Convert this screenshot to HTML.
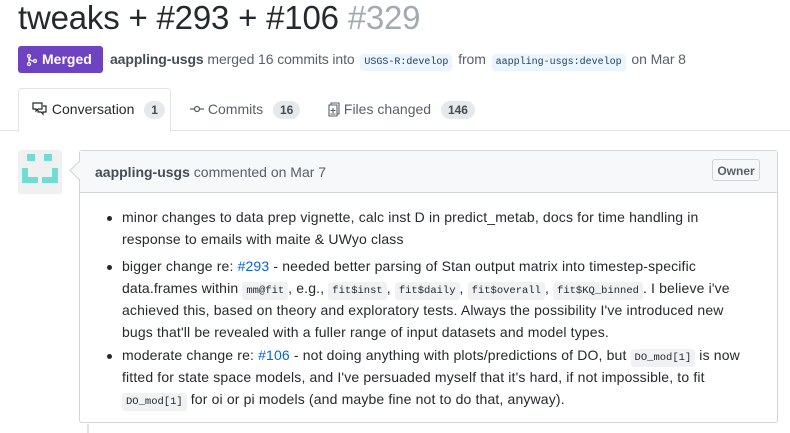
<!DOCTYPE html>
<html><head><meta charset="utf-8"><style>
body{margin:0;width:790px;height:433px;overflow:hidden;background:#fff;font-family:"Liberation Sans",Helvetica,Arial,sans-serif;color:#24292e;position:relative}
.a{position:absolute;white-space:nowrap}
h1{position:absolute;left:18px;top:-1px;margin:0;font-size:33px;font-weight:400;letter-spacing:-0.2px}
h1 span{color:#a3aab1}
.badge{position:absolute;left:18px;top:46px;width:85px;height:27px;background:#6f42c1;border-radius:3px;color:#fff;font-weight:bold;font-size:14px;line-height:27px}
.meta{position:absolute;left:110px;top:51px;font-size:14px;color:#586069;white-space:nowrap;letter-spacing:-0.1px}
.meta b{color:#444d56}
.br{font-family:"Liberation Mono",monospace;font-size:10px;background:#eaf5ff;color:#24405e;padding:3px 4px;border-radius:3px;margin:0 2px;letter-spacing:0}
.tabline{position:absolute;left:0;top:130px;width:790px;height:1px;background:#e1e4e8}
.tab1{position:absolute;left:18px;top:88px;width:151px;height:43px;border:1px solid #e1e4e8;border-bottom:none;border-radius:3px 3px 0 0;background:#fff}
.tab{position:absolute;top:101px;font-size:14px;color:#586069;white-space:nowrap}
.tab.on{color:#24292e}
.cnt{display:inline-block;background:#e6e9ec;border-radius:10px;font-size:12px;font-weight:bold;color:#444d56;padding:1px 7px;margin-left:6px;line-height:16px}
.av{position:absolute;left:18px;top:150px;width:44px;height:44px;background:#f0f0f0;border-radius:3px}
.av i{position:absolute;background:#6fddd6}
.box{position:absolute;left:79px;top:150px;width:697px;height:271px;border:1px solid #d1d5da;border-radius:3px}
.hd{position:absolute;left:0;top:0;width:697px;height:41px;background:#f6f8fa;border-bottom:1px solid #d1d5da}
.arrow{position:absolute;left:72px;top:164px;width:12px;height:12px;background:#f6f8fa;border-left:1px solid #d1d5da;border-bottom:1px solid #d1d5da;transform:rotate(45deg)}
.own{position:absolute;left:712px;top:159px;width:48px;height:22px;border:1px solid #d1d5da;border-radius:3px;font-size:12px;font-weight:bold;color:#586069;text-align:center;line-height:22px;box-sizing:border-box}
.ln{position:absolute;left:122px;font-size:14px;white-space:nowrap;color:#24292e;letter-spacing:0.15px}
.dot{position:absolute;left:107px;width:5px;height:5px;border-radius:50%;background:#24292e}
code{font-family:"Liberation Mono",monospace;font-size:10.5px;background:#f0f1f3;padding:3px 4px;border-radius:3px;letter-spacing:0}
a{color:#0366d6;text-decoration:none}
</style></head><body>
<h1>tweaks + #293 + #106 <span>#329</span></h1>
<div class="badge"><svg style="position:absolute;left:9px;top:8px" width="10" height="12" viewBox="0 0 10 12"><circle cx="2" cy="2" r="1.5" fill="none" stroke="#fff" stroke-width="1.2"/><circle cx="2" cy="10" r="1.5" fill="none" stroke="#fff" stroke-width="1.2"/><circle cx="8" cy="7" r="1.5" fill="none" stroke="#fff" stroke-width="1.2"/><path d="M2 3.5V8.5M2 3.5Q3 7 6.5 7" fill="none" stroke="#fff" stroke-width="1.2"/></svg><span style="position:absolute;left:24px">Merged</span></div>
<div class="meta"><b>aappling-usgs</b> merged 16 commits into <span class="br">USGS-R:develop</span> from <span class="br">aappling-usgs:develop</span> on Mar 8</div>
<div class="tabline"></div>
<div class="tab1"></div>
<div class="tab on" style="left:32px"><svg width="16" height="14" viewBox="0 0 16 14" style="vertical-align:-2px"><path d="M1 1h9v6H6l-2 2V7H1z M6 8v2h3l2 2v-2h3V4h-3" fill="none" stroke="#24292e" stroke-width="1.2"/></svg> Conversation <span class="cnt">1</span></div>
<div class="tab" style="left:190px"><svg width="14" height="10" viewBox="0 0 14 10" style="vertical-align:0"><circle cx="7" cy="5" r="2.5" fill="none" stroke="#586069" stroke-width="1.3"/><path d="M0 5h4.5M9.5 5H14" stroke="#586069" stroke-width="1.3"/></svg> Commits <span class="cnt">16</span></div>
<div class="tab" style="left:328px"><svg width="12" height="15" viewBox="0 0 12 15" style="vertical-align:-3px"><path d="M1 3h8v11H1z M3 3V1h8v11H9 M5 6v5M2.5 8.5h5M2.5 12h5" fill="none" stroke="#586069" stroke-width="1.1"/></svg> Files changed <span class="cnt">146</span></div>
<div class="av"><i style="left:9px;top:4px;width:8px;height:7px"></i><i style="left:26px;top:4px;width:8px;height:7px"></i><i style="left:4px;top:18px;width:6px;height:15px"></i><i style="left:4px;top:27px;width:16px;height:6px"></i><i style="left:34px;top:18px;width:6px;height:15px"></i><i style="left:24px;top:27px;width:16px;height:6px"></i></div>
<div class="box"><div class="hd"></div></div>
<div class="arrow"></div>
<div class="a" style="left:95px;top:164px;font-size:14px;color:#586069"><b style="color:#444d56">aappling-usgs</b> commented on Mar 7</div>
<div class="own">Owner</div>
<div class="dot" style="top:216px"></div>
<div class="ln" style="top:209px">minor changes to data prep vignette, calc inst D in predict_metab, docs for time handling in</div>
<div class="ln" style="top:231px">response to emails with maite &amp; UWyo class</div>
<div class="dot" style="top:265px"></div>
<div class="ln" style="top:258px">bigger change re: <a>#293</a> - needed better parsing of Stan output matrix into timestep-specific</div>
<div class="ln" style="top:280px">data.frames within <code>mm@fit</code>, e.g., <code>fit$inst</code>, <code>fit$daily</code>, <code>fit$overall</code>, <code>fit$KQ_binned</code>. I believe i've</div>
<div class="ln" style="top:302px">achieved this, based on theory and exploratory tests. Always the possibility I've introduced new</div>
<div class="ln" style="top:324px">bugs that'll be revealed with a fuller range of input datasets and model types.</div>
<div class="dot" style="top:354px"></div>
<div class="ln" style="top:347px">moderate change re: <a>#106</a> - not doing anything with plots/predictions of DO, but <code>DO_mod[1]</code> is now</div>
<div class="ln" style="top:369px">fitted for state space models, and I've persuaded myself that it's hard, if not impossible, to fit</div>
<div class="ln" style="top:391px"><code>DO_mod[1]</code> for oi or pi models (and maybe fine not to do that, anyway).</div>
<div style="position:absolute;left:87px;top:424px;width:2px;height:9px;background:#e1e4e8"></div>
</body></html>
